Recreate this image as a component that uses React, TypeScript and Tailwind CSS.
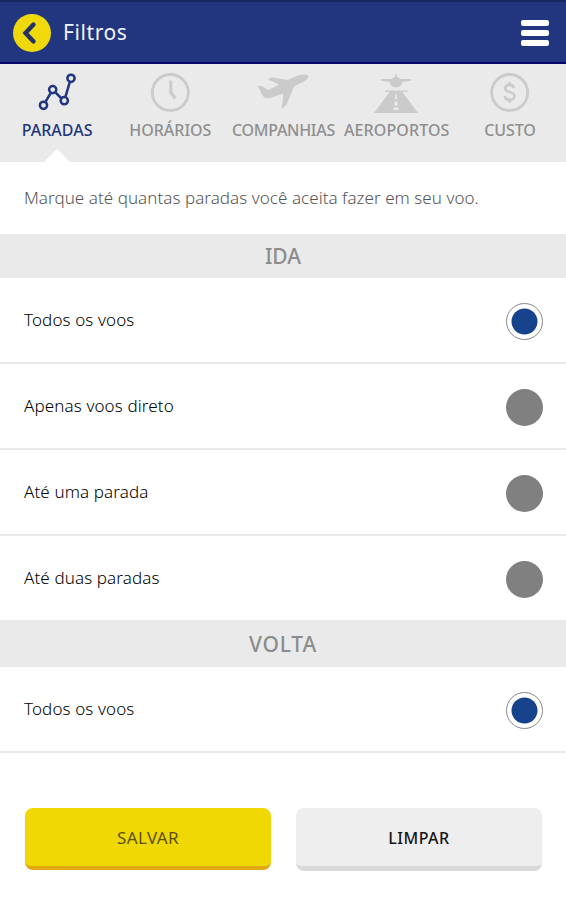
import React from "react";

const tabs = [
  { label: "PARADAS", icon: <StopsIcon />, spacing: "tracking-[0px]" },
  { label: "HORÁRIOS", icon: <ClockIcon />, spacing: "tracking-[0px]" },
  { label: "COMPANHIAS", icon: <PlaneIcon />, spacing: "tracking-[-0.3px]" },
  { label: "AEROPORTOS", icon: <AirportIcon />, spacing: "tracking-[0.1px]" },
  { label: "CUSTO", icon: <CostIcon />, spacing: "tracking-[-0.1px]" },
];

function StopsIcon() {
  return (
    <svg width="44" height="40" viewBox="0 0 44 40" fill="none" stroke="currentColor" strokeWidth="2.5">
      <path d="M10.6 27.6 L15.5 19.3 M20.7 18.6 L26 24 M30.5 22.7 L34.7 8.3" />
      <circle cx="8.5" cy="31.3" r="3.6" />
      <circle cx="17.7" cy="15.6" r="3.6" />
      <circle cx="29.3" cy="26.7" r="3.6" />
      <circle cx="36" cy="4.3" r="3.6" />
    </svg>
  );
}

function ClockIcon() {
  return (
    <svg width="44" height="40" viewBox="0 0 44 40" fill="none" stroke="currentColor">
      <circle cx="22.3" cy="18.5" r="18" strokeWidth="2.8" />
      <path d="M22.8 6.5 V18.5 L27.3 24.5" strokeWidth="3.2" />
    </svg>
  );
}

function PlaneIcon() {
  return (
    <svg width="56" height="40" viewBox="0 0 56 40" fill="currentColor">
      <path d="M2.5 12 L6.5 12 L13 16.2 L24 10.5 L13 5.2 L16.5 3.2 L32.5 6 L43 1.6 C47 0.2 52.5 0.2 53.3 2 C54 4 51 6.5 47 8.5 L39 12.5 L31.5 31 L26.5 35 L28.5 19.5 L16.5 23.5 C12 25 9.5 24.5 7.5 21.5 Z" />
    </svg>
  );
}

function AirportIcon() {
  return (
    <svg width="44" height="40" viewBox="0 0 44 40" fill="currentColor">
      <path d="M22 -1 L23.5 3 L27 5 H37 V6.8 L28.3 8 C28 11.3 25.2 13.3 22 13.3 C18.8 13.3 16 11.3 15.7 8 L7 6.8 V5 H17 L20.5 3 Z" />
      <path d="M11 16.5 H33.5 V18 H28.3 L44 39 H0 L15.7 18 H11 Z" />
      <path d="M21.3 20 H22.7 L23 25 H21 Z M20.7 27.5 H23.3 L23.7 31.5 H20.3 Z M19.8 33.5 H24.2 L24.7 36 H19.3 Z" fill="#eaeaea" />
    </svg>
  );
}

function CostIcon() {
  return (
    <svg width="44" height="40" viewBox="0 0 44 40" fill="none" stroke="currentColor">
      <circle cx="22.7" cy="18.5" r="18" strokeWidth="2.8" />
      <path d="M26.8 13.9 C26.4 11.8 24.8 10.9 22.7 10.9 C20.2 10.9 18.2 12.3 18.2 14.5 C18.2 19 27.4 17.1 27.4 21.9 C27.4 24.4 25.2 25.8 22.7 25.8 C20 25.8 18 24.5 17.7 22 M22.7 8 V11 M22.7 25.8 V28.8" strokeWidth="2.6" />
    </svg>
  );
}

function SectionTitle({ children, className }: { children: string; className: string }) {
  return (
    <h2 className={`flex items-center justify-center bg-[#eaeaea] pt-px text-[21px] font-medium text-[#8c8c8c] ${className}`}>
      {children}
    </h2>
  );
}

function Option({ label, checked = false }: { label: string; checked?: boolean }) {
  return (
    <label className="flex h-[86px] items-center justify-between border-b-2 border-[#e9e9e9] pr-[23px] pl-6 text-[17px] font-light tracking-[0.12px] text-black">
      <span>{label}</span>
      {checked ? (
        <span className="mt-[2px] flex size-[37px] items-center justify-center rounded-full border-[1.5px] border-[#888]">
          <svg width="27" height="27" viewBox="0 0 27 27" fill="#16438b">
            <circle cx="13.5" cy="13.5" r="13" />
          </svg>
        </span>
      ) : (
        <span className="mt-[2px] size-[37px] rounded-full bg-[#808080]" />
      )}
    </label>
  );
}

export default function App() {
  return (
    <div className="h-[900px] w-[566px] overflow-hidden bg-white font-['Noto_Sans','Open_Sans',sans-serif]">
      {/* header */}
      <header className="flex h-16 items-center justify-between border-t-2 border-b-2 border-t-[#17275f] border-b-[#06096b] bg-[#21367f] pt-px pr-[17px] pl-[13px]">
        <div className="flex items-center gap-3">
          <button className="flex size-[38px] items-center justify-center rounded-full bg-[#f0d90b]">
            <svg width="38" height="38" viewBox="0 0 38 38" fill="none" stroke="#213269" strokeWidth="4.4" strokeLinecap="round">
              <path d="M20.5 10.5 L12.5 19 L20.5 27.5" />
            </svg>
          </button>
          <h1 className="text-[21px] tracking-[0.6px] text-[#f4f4ff]">Filtros</h1>
        </div>
        <button className="flex flex-col gap-1">
          <span className="h-[6px] w-7 rounded-[2px] bg-white" />
          <span className="h-[6px] w-7 rounded-[2px] bg-white" />
          <span className="h-[6px] w-7 rounded-[2px] bg-white" />
        </button>
      </header>

      {/* tabs */}
      <nav className="flex h-[98px] bg-[#eaeaea]">
        {tabs.map((tab, i) => (
          <button
            key={tab.label}
            className={`flex flex-1 basis-0 flex-col items-center pt-[10px] ${i === 0 ? "text-[#21367f]" : "text-[#8f8f8f]"}`}
          >
            <span className={`flex h-10 justify-center [&>svg]:overflow-visible ${i === 0 ? "" : "text-[#cbcbcb]"}`}>{tab.icon}</span>
            <span className={`mt-[5px] pl-px text-base leading-[23px] font-medium whitespace-nowrap ${tab.spacing}`}>{tab.label}</span>
            {i === 0 && (
              <svg className="mt-auto" width="26" height="13" viewBox="0 0 26 13" fill="#fff">
                <path d="M0 13 L13 0 L26 13 Z" />
              </svg>
            )}
          </button>
        ))}
      </nav>

      <p className="flex h-[72px] items-center pl-6 text-[17px] font-light tracking-[0.05px] whitespace-nowrap text-[#555]">
        Marque até quantas paradas você aceita fazer em seu voo.
      </p>

      {/* outbound */}
      <SectionTitle className="h-11">IDA</SectionTitle>
      <Option label="Todos os voos" checked />
      <Option label="Apenas voos direto" />
      <Option label="Até uma parada" />
      <Option label="Até duas paradas" />

      {/* return */}
      <SectionTitle className="h-[45px] tracking-[0.8px]">VOLTA</SectionTitle>
      <Option label="Todos os voos" checked />

      <div className="mt-[55px] flex gap-[25px] pr-6 pl-[25px]">
        <button className="h-[62px] flex-1 rounded-lg border-b-4 border-[#dfa90f] bg-[#f0d805] pt-0.5 text-[17px] tracking-[0.4px] text-[#5c5005]">
          SALVAR
        </button>
        <button className="h-[63px] flex-1 rounded-lg border-b-[5px] border-[#d9d9d9] bg-[#eee] pt-0.5 text-base font-medium tracking-[0.5px] text-[#151515]">
          LIMPAR
        </button>
      </div>
    </div>
  );
}
